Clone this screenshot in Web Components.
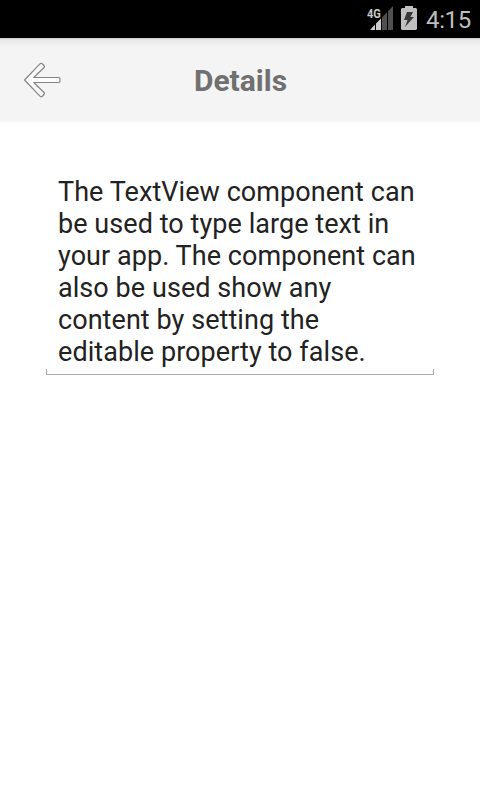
<!DOCTYPE html>
<html lang="en"><head><meta charset="utf-8"><title>Details</title>
<style>html,body{margin:0;height:100%;background:#fff}body{font-family:Roboto,sans-serif;overflow:hidden}</style></head>
<body><app-screen></app-screen>
<script>
const define=(name,html)=>customElements.define(name,class extends HTMLElement{constructor(){super();const t=document.createElement('template');t.innerHTML=html;this.attachShadow({mode:'open'}).append(t.content.cloneNode(true));}});
define('signal-icon',`<style>:host{display:block;width:26px;height:26px}svg{display:block}</style>
<svg width="26" height="26" viewBox="0 0 26 26"><path d="M15 11.5L20 6.2V24H15ZM21 5.2L26 0V24H21Z" fill="#505050"/><path d="M3 24L8 18.5V24ZM9 17.5L14 12.5V24H9Z" fill="#ccc"/><g transform="scale(.82 1)"><text x="0" y="12" font-family="Roboto" font-weight="700" font-size="13.5" fill="#c8c8c8" stroke="#000" stroke-width="1.5" paint-order="stroke">4G</text></g></svg>`);
define('battery-icon',`<style>:host{display:block;width:16px;height:24px}svg{display:block}</style>
<svg width="16" height="24" viewBox="0 0 16 24"><path d="M4 0H12V2H15L16 3V23L15 24H1L0 23V3L1 2H4Z" fill="#c0c0c0"/><path d="M6 6H12L9.5 11H13L4 21L6.5 14H3Z" fill="#383838"/></svg>`);
define('status-bar',`<style>:host{display:flex;height:38px;background:#000;justify-content:flex-end;box-sizing:border-box;padding:6px 9px 0 0;color:#bebebe}battery-icon{margin:0 9px 0 8px}span{font-size:24px;line-height:28px;width:45px;white-space:nowrap;letter-spacing:-.35px}</style>
<signal-icon></signal-icon><battery-icon></battery-icon><span><slot></slot></span>`);
define('back-arrow',`<style>:host{display:block;width:38px;height:36px}svg{display:block}</style>
<svg width="38" height="36" viewBox="0 0 38 36"><path d="M1.5 18L17 1.8Q18.3.8 19.5 2L21 3.5Q22 4.5 21 5.5L10.8 15.5H35.5Q37 15.5 37 17V19Q37 20.5 35.5 20.5H10.8L21 30.5Q22 31.5 21 32.5L19.5 34Q18.3 35.2 17 34.2Z" fill="#fcfcfc" stroke="#858585" stroke-width="1.2" stroke-linejoin="round"/></svg>`);
define('nav-bar',`<style>:host{display:grid;grid-template-columns:62px 1fr 62px;height:84px;background:linear-gradient(#c8c8c8,#e9e9e9 2px,#f4f4f4 9px);align-items:center;text-align:center;color:#707070}back-arrow{margin-left:23px}h1{margin:0;padding:2px 0 0 1px;font-size:30px;line-height:36px;font-weight:700}</style>
<back-arrow></back-arrow><h1><slot></slot></h1>`);
define('text-view',`<style>:host{display:block;margin:52px 46px 0;height:201px;box-sizing:border-box;padding:2px 0 0 12px;font-size:27px;line-height:32px;letter-spacing:.06px;color:#222;white-space:pre;position:relative}.u{position:absolute;left:0;right:0;bottom:0;height:5px;border:1px solid #aaa;border-top:0}</style><slot></slot><div class="u"></div>`);
define('app-screen',`<style>:host{display:block;height:800px}</style><status-bar>4:15</status-bar><nav-bar>Details</nav-bar><text-view>The TextView component can
be used to type large text in
your app. The component can
also be used show any
content by setting the
editable property to false.</text-view>`);
</script></body></html>
